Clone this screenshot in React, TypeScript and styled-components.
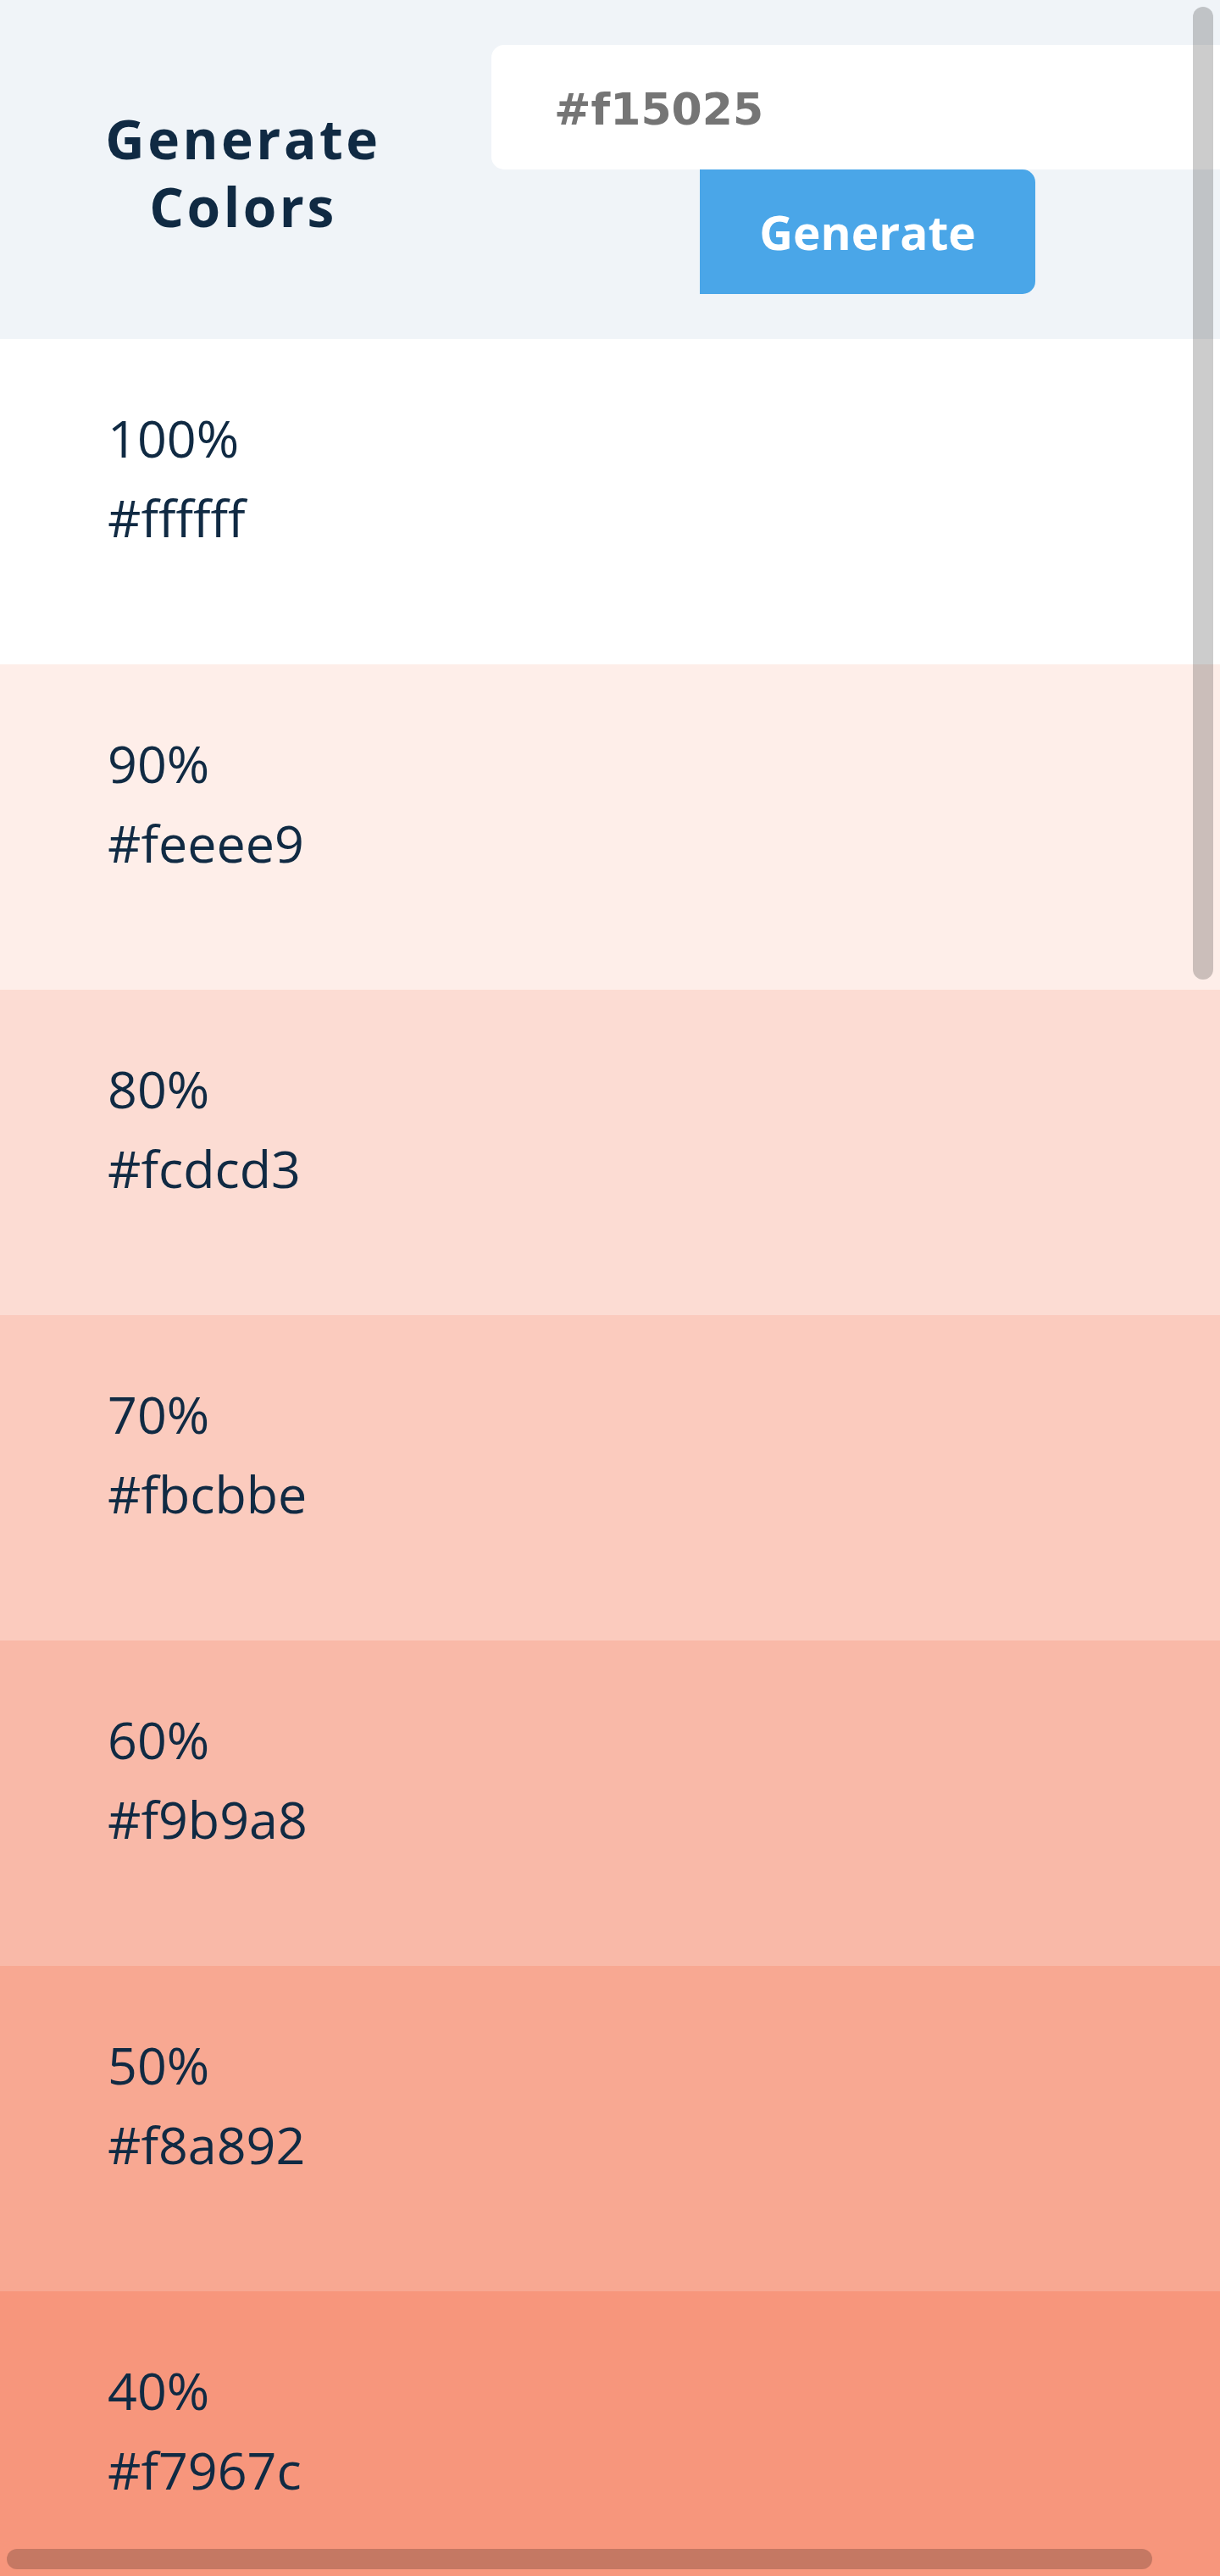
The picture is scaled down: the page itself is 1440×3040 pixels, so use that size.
import React from "react";
import styled, { createGlobalStyle } from "styled-components";

const GlobalStyle = createGlobalStyle`
  html, body {
    margin: 0;
    padding: 0;
    overflow: hidden;
    background: #ffffff;
  }
  * { box-sizing: border-box; }
`;

const Page = styled.div`
  position: relative;
  width: 1440px;
  height: 3040px;
  overflow: hidden;
  font-family: "Open Sans", "Noto Sans", sans-serif;
  color: #102a43;
`;

const Header = styled.section`
  display: flex;
  align-items: center;
  height: 400px;
  width: 1508px;
  background: #f0f4f8;
`;

const Title = styled.h3`
  flex: 0 0 574px;
  margin: 8px 0 0;
  text-align: center;
  font-size: 64px;
  line-height: 80px;
  font-weight: 700;
  letter-spacing: 3.5px;
  color: #102a43;
`;

const Form = styled.form`
  display: flex;
  flex-direction: column;
  align-items: center;
  margin-left: 6px;
  width: 888px;
`;

const Input = styled.input`
  width: 888px;
  height: 147px;
  border: none;
  outline: none;
  border-radius: 15px 0 0 15px;
  background: #ffffff;
  padding: 4px 0 0 74px;
  font-family: "DejaVu Sans", Verdana, sans-serif;
  font-weight: 700;
  font-size: 52px;
  color: #757575;
  &::placeholder {
    color: #757575;
    opacity: 1;
  }
`;

const Button = styled.button`
  width: 396px;
  height: 147px;
  border: none;
  border-radius: 0 15px 15px 0;
  background: #4aa6e8;
  color: #ffffff;
  font-family: "Open Sans", "Noto Sans", sans-serif;
  font-size: 55px;
  font-weight: 700;
  cursor: pointer;
  padding: 0;
`;

const List = styled.section`
  display: flex;
  flex-direction: column;
`;

const Swatch = styled.article<{ $bg: string; $dark: boolean }>`
  flex: 0 0 384px;
  height: 384px;
  padding: 70px 0 0 127px;
  background: ${(p) => p.$bg};
  color: ${(p) => (p.$dark ? "#ffffff" : "#102a43")};
`;

const Value = styled.p`
  margin: 0;
  font-size: 61px;
  line-height: 94px;
  font-weight: 400;
`;

const VThumb = styled.div`
  position: absolute;
  top: 8px;
  right: 8px;
  width: 24px;
  height: 1148px;
  border-radius: 12px;
  background: rgba(0, 0, 0, 0.2);
`;

const HThumb = styled.div`
  position: absolute;
  left: 8px;
  bottom: 8px;
  width: 1352px;
  height: 24px;
  border-radius: 12px;
  background: rgba(0, 0, 0, 0.2);
`;

const base = [241, 80, 37];
const hex = (rgb: number[]) =>
  "#" + rgb.map((v) => Math.round(v).toString(16).padStart(2, "0")).join("");

type Item = { weight: number; hex: string; dark: boolean };

const items: Item[] = [];
for (let w = 100; w >= 10; w -= 10) {
  items.push({
    weight: w,
    hex: hex(base.map((c) => Math.round(c + (255 - c) * (w / 100)))),
    dark: false,
  });
}
items.push({ weight: 0, hex: hex(base), dark: false });
for (let w = 10; w <= 100; w += 10) {
  items.push({
    weight: w,
    hex: hex(base.map((c) => Math.round(c * (1 - w / 100)))),
    dark: true,
  });
}

// Only the swatches that fall inside the visible window are rendered.
const visible = items.slice(0, 7);

export default function App() {
  return (
    <>
      <GlobalStyle />
      <Page>
        <Header>
          <Title>
            Generate
            <br />
            Colors
          </Title>
          <Form onSubmit={(e) => e.preventDefault()}>
            <Input type="text" placeholder="#f15025" />
            <Button type="submit">Generate</Button>
          </Form>
        </Header>
        <List>
          {visible.map((it, i) => (
            <Swatch key={i} $bg={it.hex} $dark={it.dark}>
              <Value>{it.weight}%</Value>
              <Value>{it.hex}</Value>
            </Swatch>
          ))}
        </List>
        <VThumb />
        <HThumb />
      </Page>
    </>
  );
}
